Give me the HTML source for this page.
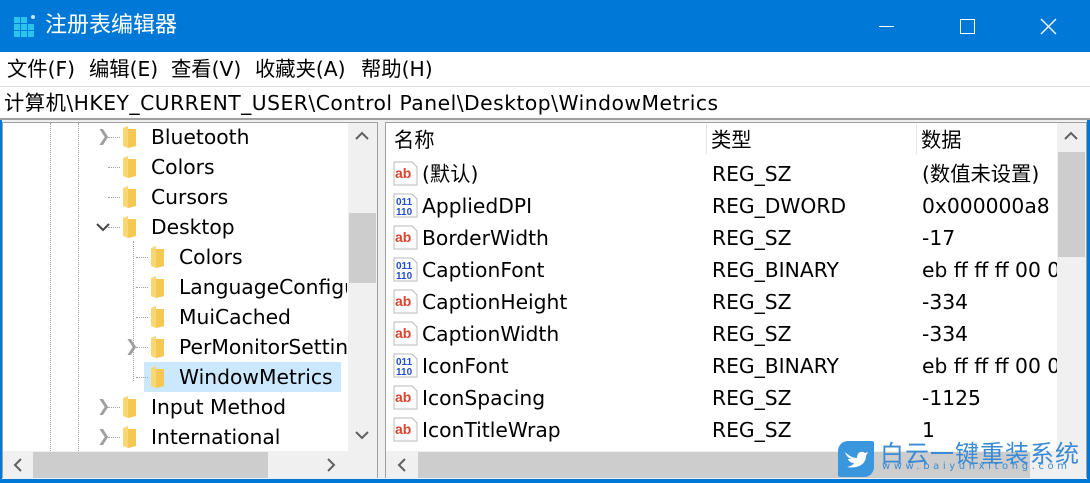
<!DOCTYPE html>
<html><head><meta charset="utf-8"><style>
*{margin:0;padding:0;box-sizing:border-box}
body{width:1090px;height:483px;overflow:hidden;background:#0078d7;font-family:"DejaVu Sans","Noto Sans CJK SC",sans-serif;font-size:20.3px;color:#000;position:relative}
.a{position:absolute}
.t{position:absolute;white-space:nowrap;line-height:30px}
.fold{position:absolute;width:15px;height:22px}
.chev{position:absolute;font-size:16px;color:#a0a0a0}
.ico{position:absolute;width:26px;height:26px}
.dotv{position:absolute;width:1px;border-left:1px dotted #a0a0a0}
.doth{position:absolute;height:1px;border-top:1px dotted #a0a0a0}
</style></head><body>
<div class="a" style="left:0;top:0;width:1090px;height:52px;background:#0078d7"></div>
<svg class="a" style="left:13px;top:14px" width="26" height="26">
<g fill="#29c5ec"><rect x="1" y="3" width="6" height="6"/><rect x="8" y="3" width="6" height="6"/>
<rect x="1" y="10" width="6" height="6"/><rect x="8" y="10" width="6" height="6"/><rect x="15" y="10" width="6" height="6"/>
<rect x="1" y="17" width="6" height="6"/><rect x="8" y="17" width="6" height="6"/><rect x="15" y="17" width="6" height="6"/></g>
<circle cx="20" cy="3" r="2" fill="#bfe8f8"/></svg>
<div class="t" style="left:45px;top:11px;color:#fff;font-size:22px">注册表编辑器</div>
<div class="a" style="left:879px;top:26px;width:15px;height:1px;background:#fff"></div>
<div class="a" style="left:960px;top:19px;width:15px;height:15px;border:1px solid #fff"></div>
<svg class="a" style="left:1040px;top:18px" width="17" height="17"><path d="M1 1L16 16M16 1L1 16" stroke="#fff" stroke-width="1.3"/></svg>
<div class="a" style="left:0;top:52px;width:1090px;height:34px;background:#fff"></div>
<div class="t" style="left:7px;top:54px">文件(F)</div>
<div class="t" style="left:89px;top:54px">编辑(E)</div>
<div class="t" style="left:171px;top:54px">查看(V)</div>
<div class="t" style="left:255px;top:54px">收藏夹(A)</div>
<div class="t" style="left:361px;top:54px">帮助(H)</div>
<div class="a" style="left:0;top:86px;width:1090px;height:34px;background:#fff;border-top:1px solid #ddd;border-bottom:2px solid #a0a0a0"></div>
<div class="t" style="left:4px;top:88px;letter-spacing:0.5px">计算机\HKEY_CURRENT_USER\Control Panel\Desktop\WindowMetrics</div>
<div class="a" style="left:2px;top:120px;width:1085px;height:359px;background:#f0f0f0"></div>
<div class="a" style="left:2px;top:122px;width:376px;height:356px;background:#fff;border:1px solid #a0a0a0;overflow:hidden">
<div class="dotv" style="left:47px;top:0;height:330px"></div>
<div class="dotv" style="left:75px;top:0;height:330px"></div>
<div class="dotv" style="left:130px;top:118px;height:140px"></div>
<div class="a" style="left:141px;top:239px;width:197px;height:30px;background:#cce8ff"></div>
</div>
<div class="chev" style="left:97px;top:126px">&#x276F;</div>
<div class="chev" style="left:97px;top:396px">&#x276F;</div>
<div class="chev" style="left:97px;top:426px">&#x276F;</div>
<div class="chev" style="left:125px;top:336px">&#x276F;</div>
<svg class="a" style="left:96px;top:222px" width="14" height="10"><path d="M1 2L7 8L13 2" stroke="#444" stroke-width="2" fill="none"/></svg>
<div id="tree"></div>
<div class="a" style="left:348px;top:123px;width:29px;height:328px;background:#f0f0f0"></div>
<div class="a" style="left:349px;top:213px;width:27px;height:70px;background:#cdcdcd"></div>
<svg class="a" style="left:355px;top:131px" width="14" height="10"><path d="M1 8L7 2L13 8" stroke="#606060" stroke-width="2" fill="none"/></svg>
<svg class="a" style="left:355px;top:430px" width="14" height="10"><path d="M1 2L7 8L13 2" stroke="#606060" stroke-width="2" fill="none"/></svg>
<div class="a" style="left:3px;top:451px;width:374px;height:27px;background:#f0f0f0"></div>
<div class="a" style="left:33px;top:452px;width:235px;height:26px;background:#cdcdcd"></div>
<svg class="a" style="left:13px;top:458px" width="10" height="14"><path d="M8 1L2 7L8 13" stroke="#606060" stroke-width="2" fill="none"/></svg>
<svg class="a" style="left:326px;top:458px" width="10" height="14"><path d="M2 1L8 7L2 13" stroke="#606060" stroke-width="2" fill="none"/></svg>
<div class="a" style="left:385px;top:122px;width:702px;height:356px;background:#fff;border:1px solid #a0a0a0"></div>
<div class="a" style="left:706px;top:124px;width:1px;height:30px;background:#e5e5e5"></div>
<div class="a" style="left:916px;top:124px;width:1px;height:30px;background:#e5e5e5"></div>
<div class="t" style="left:394px;top:125px">名称</div>
<div class="t" style="left:711px;top:125px">类型</div>
<div class="t" style="left:921px;top:125px">数据</div>
<div id="list"></div>
<div class="a" style="left:1057px;top:123px;width:29px;height:328px;background:#f0f0f0"></div>
<div class="a" style="left:1058px;top:152px;width:27px;height:105px;background:#cdcdcd"></div>
<svg class="a" style="left:1064px;top:131px" width="14" height="10"><path d="M1 8L7 2L13 8" stroke="#606060" stroke-width="2" fill="none"/></svg>
<div class="a" style="left:386px;top:451px;width:700px;height:27px;background:#f0f0f0"></div>
<div class="a" style="left:418px;top:452px;width:612px;height:26px;background:#cdcdcd"></div>
<svg class="a" style="left:397px;top:458px" width="10" height="14"><path d="M8 1L2 7L8 13" stroke="#606060" stroke-width="2" fill="none"/></svg>
<div class="a" style="left:838px;top:441px;width:36px;height:36px;background:#3a96dd;border-radius:10px 2px 10px 2px"></div>
<svg class="a" style="left:843px;top:448px" width="26" height="22"><path d="M2 4C6 8 10 10 14 10C14 5 18 2 22 5L25 4L23 8C23 16 15 21 4 19C8 18 10 17 11 15C7 15 5 12 5 11C6 11 7 11 8 11C4 9 3 7 2 4Z" fill="#fff"/></svg>
<div class="t" style="left:880px;top:437px;color:#3a8ad4;font-size:24px;letter-spacing:1px;font-family:'Noto Sans CJK SC',sans-serif">白云一键重装系统</div>
<div class="t" style="left:882px;top:460px;color:#3a8ad4;font-size:10px;letter-spacing:3.6px;line-height:14px">www.baiyunxitong.com</div>
<script>
var tr=[[151,122,'Bluetooth'],[151,122,'Colors'],[151,122,'Cursors'],[151,122,'Desktop'],[179,150,'Colors'],[179,150,'LanguageConfigu'],[179,150,'MuiCached'],[179,150,'PerMonitorSettin'],[179,150,'WindowMetrics'],[151,122,'Input Method'],[151,122,'International']];
var h='';tr.forEach(function(r,i){var y=122+i*30;
h+='<div class="fold" style="left:'+r[1]+'px;top:'+(y+4)+'px"><svg width="15" height="22"><path d="M1 2L6 0L6 3L14 3L14 20L6 22L1 20Z" fill="#f8d775"/><path d="M6 3L14 3L14 20L6 22Z" fill="#f4c853"/></svg></div>';
h+='<div class="doth" style="left:'+(r[1]-14)+'px;top:'+(y+15)+'px;width:12px"></div>';
var w=r[0]==179?'width:168px;overflow:hidden;':'';
h+='<div class="t" style="left:'+r[0]+'px;top:'+y+'px;'+w+'">'+r[2]+'</div>';});
document.getElementById('tree').innerHTML=h;
var ls=[['ab','(默认)','REG_SZ','(数值未设置)'],['01','AppliedDPI','REG_DWORD','0x000000a8 (1'],['ab','BorderWidth','REG_SZ','-17'],['01','CaptionFont','REG_BINARY','eb ff ff ff 00 00'],['ab','CaptionHeight','REG_SZ','-334'],['ab','CaptionWidth','REG_SZ','-334'],['01','IconFont','REG_BINARY','eb ff ff ff 00 00'],['ab','IconSpacing','REG_SZ','-1125'],['ab','IconTitleWrap','REG_SZ','1']];
h='';ls.forEach(function(r,i){var y=159+i*32;
var ic=r[0]=='ab'?'<svg width="26" height="26"><path d="M2 1L20 1L25 6L25 24L2 24Z" fill="#fff" stroke="#bbb"/><text x="3" y="17" font-size="14" font-weight="bold" fill="#d9452b" font-family="Liberation Sans">ab</text></svg>':'<svg width="26" height="26"><path d="M2 1L20 1L25 6L25 24L2 24Z" fill="#fff" stroke="#bbb"/><text x="4" y="12" font-size="10" font-weight="bold" fill="#2350c8" font-family="Liberation Sans">011</text><text x="4" y="22" font-size="10" font-weight="bold" fill="#2350c8" font-family="Liberation Sans">110</text></svg>';
h+='<div class="ico" style="left:392px;top:'+(y+2)+'px">'+ic+'</div>';
h+='<div class="t" style="left:422px;top:'+y+'px">'+r[1]+'</div>';
h+='<div class="t" style="left:712px;top:'+y+'px">'+r[2]+'</div>';
h+='<div class="t" style="left:922px;top:'+y+'px;width:135px;overflow:hidden">'+r[3]+'</div>';});
document.getElementById('list').innerHTML=h;
</script>
</body></html>
